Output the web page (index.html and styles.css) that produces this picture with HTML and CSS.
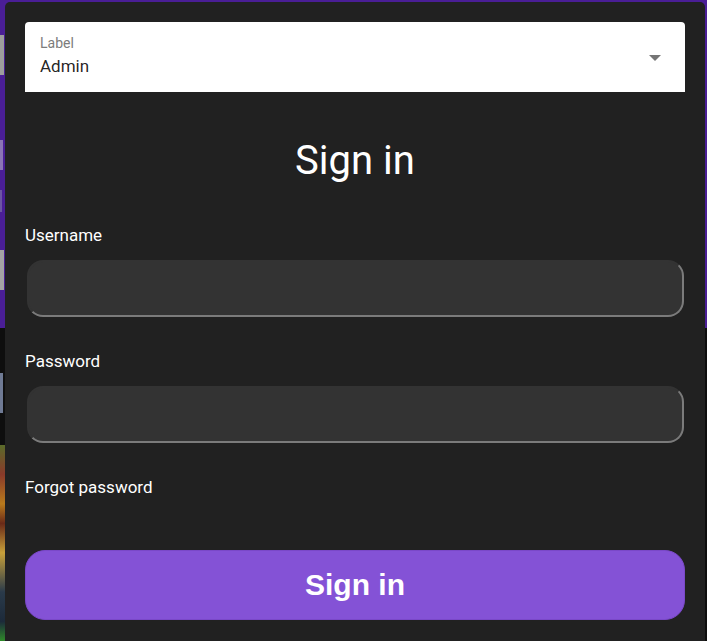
FILE: index.html
```html
<!DOCTYPE html>
<html lang="en">
<head>
<meta charset="utf-8">
<title>Sign in</title>
<link rel="stylesheet" href="styles.css">
</head>
<body>
<div class="page">
  <div class="hero">
    <div class="peek peek-n"></div>
    <div class="peek peek-e"></div>
    <div class="peek peek-dot"></div>
    <div class="peek peek-box"></div>
  </div>
  <div class="lower">
    <div class="peek peek-s"></div>
    <div class="poster"></div>
  </div>
</div>

<div class="dialog">
  <div class="select">
    <div class="select-text">
      <span class="select-label">Label</span>
      <span class="select-value">Admin</span>
    </div>
    <svg class="select-arrow" width="12" height="6" viewBox="0 0 12 6"><polygon points="0,0 12,0 6,6" fill="#757575"/></svg>
  </div>

  <h1 class="title">Sign in</h1>

  <label class="field-label" for="username">Username</label>
  <input class="field-input" id="username" type="text">

  <label class="field-label field-label-gap" for="password">Password</label>
  <input class="field-input" id="password" type="password">

  <a class="forgot">Forgot password</a>

  <button class="submit" type="button">Sign in</button>
</div>
</body>
</html>
```

FILE: styles.css
```css
* { box-sizing: border-box; }

html, body {
  margin: 0;
  padding: 0;
  width: 707px;
  height: 641px;
  overflow: hidden;
  background: #0e0e0e;
  font-family: Roboto, "Noto Sans", sans-serif;
}

.page {
  display: flex;
  flex-direction: column;
  height: 641px;
}

.hero {
  height: 328px;
  background: #4a1e96;
  display: flex;
  flex-direction: column;
  padding-top: 35px;
}

.peek { width: 4px; }
.peek-n { height: 40px; background: #9d9d9d; }
.peek-e { height: 30px; margin-top: 65px; background: #8a74b4; width: 3px; }
.peek-dot { height: 22px; margin-top: 20px; background: #6c55a3; width: 2px; }
.peek-box { height: 40px; margin-top: 38px; background: #a3a3a3; }

.lower {
  flex: 1;
  background: #0e0e0e;
  display: flex;
  flex-direction: column;
  padding-top: 45px;
}
.peek-s { height: 40px; background: #6f7a94; width: 3px; }
.poster {
  margin-top: 32px;
  width: 6px;
  flex: 1;
  background: linear-gradient(180deg, #5a6b2a 0%, #8a3a2a 15%, #b87a1c 30%, #6a2a18 40%, #c7a03a 55%, #2a3a4a 75%, #1c2a3a 90%, #2f8a2a 100%);
}

.dialog {
  position: absolute;
  left: 5px;
  top: 2px;
  width: 700px;
  height: 639px;
  overflow: hidden;
  background: #212121;
  border-radius: 5px 5px 0 0;
  padding: 20px 20px 0 20px;
  display: flex;
  flex-direction: column;
}

.select {
  flex: none;
  height: 70px;
  background: #ffffff;
  border-radius: 4px 4px 0 0;
  display: flex;
  align-items: flex-start;
  justify-content: space-between;
  padding: 13px 24px 0 15px;
}
.select-text {
  display: flex;
  flex-direction: column;
}
.select-label {
  font-size: 14px;
  line-height: 16px;
  color: #7c7c7c;
}
.select-value {
  margin-top: 5px;
  font-size: 17px;
  line-height: 20px;
  color: rgba(0, 0, 0, 0.87);
}
.select-arrow {
  margin-top: 20px;
}

.title {
  flex: none;
  margin: 45px 0 0 0;
  font-size: 40px;
  line-height: 48px;
  font-weight: 400;
  color: #ffffff;
  text-align: center;
}

.field-label {
  flex: none;
  display: block;
  margin-top: 40px;
  font-size: 17px;
  line-height: 20px;
  color: #ffffff;
}
.field-label-gap { margin-top: 34px; }

.field-input {
  flex: none;
  display: block;
  margin: 15px 1px 0 2px;
  height: 57px;
  background: #333333;
  border: 2px solid;
  border-color: #333333 #7b7b7b #7b7b7b #333333;
  border-radius: 16px;
  outline: none;
  color: #ffffff;
  font-size: 17px;
  padding: 0 16px;
}

.forgot {
  flex: none;
  display: block;
  margin-top: 34px;
  font-size: 17px;
  line-height: 20px;
  color: #ffffff;
}

.submit {
  flex: none;
  margin-top: 53px;
  height: 70px;
  background: #8452d6;
  border: 1px solid #7a48c8;
  border-radius: 20px;
  color: #ffffff;
  font-family: "Liberation Sans", Arial, sans-serif;
  font-weight: 700;
  font-size: 30px;
  cursor: pointer;
}
```
